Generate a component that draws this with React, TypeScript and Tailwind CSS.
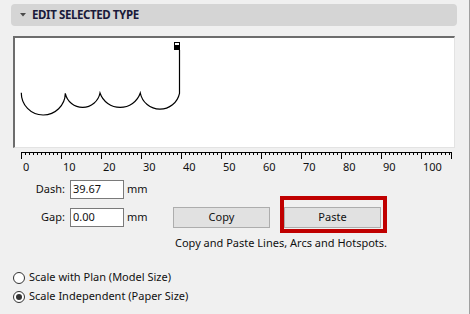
import React from "react";

const font = { fontFamily: '"Noto Sans", "Open Sans", Arial, sans-serif' };

const labels = ["0", "10", "20", "30", "40", "50", "60", "70", "80", "90", "100"];

function Ruler() {
  const ticks: React.ReactNode[] = [];
  for (let i = 0; i <= 107; i++) {
    const x = 21.5 + i * 4;
    const major = i % 10 === 0;
    ticks.push(<line key={i} x1={x} y1={152} x2={x} y2={major ? 159 : 155} stroke="#000" strokeWidth={1} />);
  }
  return (
    <svg className="block" width={470} height={12} viewBox="0 148 470 12">
      <line x1={21} y1={152.5} x2={452} y2={152.5} stroke="#000" strokeWidth={1} />
      {ticks}
      <line x1={451.5} y1={152} x2={451.5} y2={159} stroke="#000" strokeWidth={1} />
    </svg>
  );
}

function Radio({ checked, label }: { checked?: boolean; label: string }) {
  return (
    <div className="flex h-[19px] items-center">
      <span className="flex h-[12px] w-[12px] items-center justify-center rounded-full border border-[#333] bg-white">
        {checked && <span className="h-[6px] w-[6px] rounded-full bg-[#333]" />}
      </span>
      <span className="ml-[4px] text-[11px] text-[#111]">{label}</span>
    </div>
  );
}

export default function App() {
  return (
    <div className="h-[314px] w-[470px] overflow-hidden border-r border-[#a0a0a0] bg-[#f0f0f0] pt-[4px]" style={font}>
      {/* Header */}
      <div className="ml-[11px] flex h-[22px] w-[446px] items-center rounded-[4px] bg-[#d5d5d5]">
        <svg className="ml-[9px]" width={6} height={4} viewBox="0 0 6 4">
          <path d="M0 0 L6 0 L3 3.5 Z" fill="#4a4a4a" />
        </svg>
        <span className="ml-[6px] text-[11.5px] font-bold tracking-[-0.4px] text-[#1a1a3a]">EDIT SELECTED TYPE</span>
      </div>

      {/* Canvas */}
      <div className="ml-[13px] mt-[10px] h-[112px] w-[442px] border-b border-l-2 border-r border-t-2 border-b-[#e3e3e3] border-l-[#6d6d6d] border-r-[#e3e3e3] border-t-[#6d6d6d] bg-white">
        <svg className="block" width={439} height={109} viewBox="15 38 439 109">
          <path
            d="M 21.3 92.7 A 22 22 0 0 0 65.3 93.3 A 17.7 17.7 0 0 0 100 93 A 21.3 21.3 0 0 0 140.3 93 A 20 20 0 0 0 179.5 93.3 L 179.5 50"
            fill="none"
            stroke="#000"
            strokeWidth={1.2}
          />
          <rect x={174.5} y={42.5} width={5} height={3} fill="#fff" stroke="#000" strokeWidth={1} />
          <rect x={174} y={46} width={6} height={4} fill="#000" />
        </svg>
      </div>

      {/* Ruler */}
      <Ruler />
      <div className="ml-[23px] flex h-[14px] text-[11px] leading-[14px] text-[#111]">
        {labels.map((l) => (
          <span key={l} className="w-[40px] shrink-0">
            {l}
          </span>
        ))}
      </div>

      {/* Form */}
      <div className="mt-[6px] flex text-[11px] text-[#111]">
        <div className="w-[173px] shrink-0">
          <div className="flex h-[19px] items-center">
            <span className="w-[65px] text-right">Dash:</span>
            <div className="ml-[5px] flex h-[19px] w-[54px] items-center border border-[#7a7a7a] bg-white pl-[2px]">39.67</div>
            <span className="ml-[3px]">mm</span>
          </div>
          <div className="mt-[9px] flex h-[19px] items-center">
            <span className="w-[65px] text-right">Gap:</span>
            <div className="ml-[5px] flex h-[19px] w-[54px] items-center border border-[#7a7a7a] bg-white pl-[2px]">0.00</div>
            <span className="ml-[3px]">mm</span>
          </div>
        </div>
        <div className="mt-[27px]">
          <div className="flex gap-[14px]">
            <button className="flex h-[21px] w-[97px] items-center justify-center border border-[#adadad] bg-[#e1e1e1]">Copy</button>
            <div className="relative">
              <button className="flex h-[21px] w-[97px] items-center justify-center border border-[#adadad] bg-[#e1e1e1]">Paste</button>
              <span className="pointer-events-none absolute left-[-4px] top-[-11px] h-[37px] w-[107px] border-4 border-[#c00000]" />
            </div>
          </div>
          <div className="mt-[7px] pl-[2px] leading-[16px]">Copy and Paste Lines, Arcs and Hotspots.</div>
        </div>
      </div>

      {/* Scale */}
      <div className="ml-[13px] mt-[17px]">
        <Radio label="Scale with Plan (Model Size)" />
        <Radio checked label="Scale Independent (Paper Size)" />
      </div>
    </div>
  );
}
